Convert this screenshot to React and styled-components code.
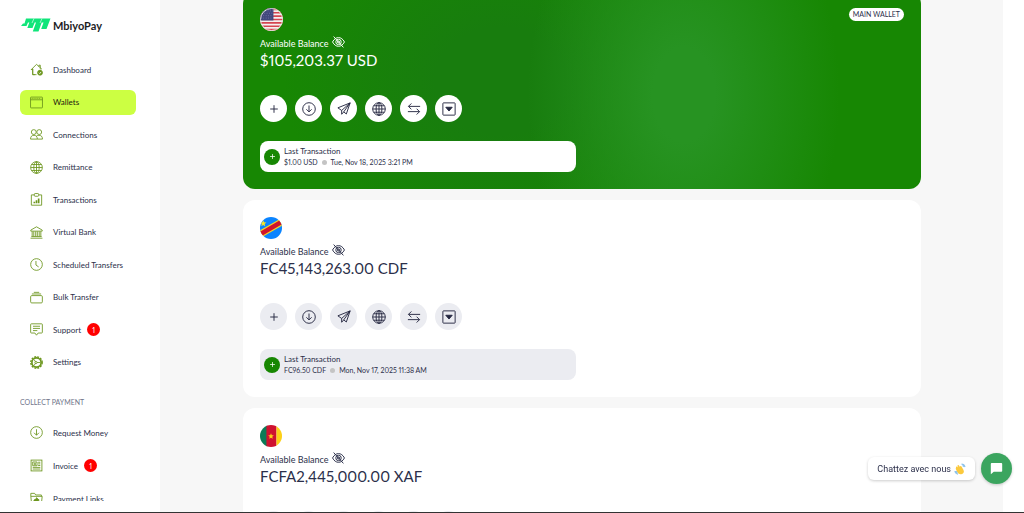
import styled, { createGlobalStyle } from "styled-components"

const menu = [
    { label: "Dashboard", icon: "home" },
    { label: "Wallets", icon: "wallet", active: true },
    { label: "Connections", icon: "people" },
    { label: "Remittance", icon: "globe" },
    { label: "Transactions", icon: "report" },
    { label: "Virtual Bank", icon: "bank" },
    { label: "Scheduled Transfers", icon: "clock" },
    { label: "Bulk Transfer", icon: "stack" },
    { label: "Support", icon: "message", count: 1 },
    { label: "Settings", icon: "gear" },
]

const collect = [
    { label: "Request Money", icon: "download" },
    { label: "Invoice", icon: "invoice", count: 1 },
    { label: "Payment Links", icon: "folder" },
]

const wallets = [
    { flag: "us", amount: "$105,203.37 USD", last: "$1.00 USD", date: "Tue, Nov 18, 2025 3:21 PM", main: true },
    { flag: "cd", amount: "FC45,143,263.00 CDF", last: "FC96.50 CDF", date: "Mon, Nov 17, 2025 11:38 AM" },
    { flag: "cm", amount: "FCFA2,445,000.00 XAF" },
]

const actions = [
    { label: "Add money", icon: "plus" },
    { label: "Request", icon: "download" },
    { label: "Send", icon: "send" },
    { label: "Remittance", icon: "globe" },
    { label: "Exchange", icon: "swap" },
    { label: "More", icon: "more" },
]

const shapes = {
    home: (
        <>
            <path d="M9 21.500H5V11L2 12.500 12 2.500l10 9" />
            <path d="M5 10.500v11h7M19 9.500V12M16.500 7V4h2.500v5" />
            <circle cx="18.500" cy="18" r="4.500" fill="currentColor" />
            <path d="m16.500 18 1.500 1.500 2.500-3" stroke="#fff" />
        </>
    ),
    wallet: (
        <>
            <rect x="1" y="2" width="22" height="20" rx="1" />
            <path d="M1 7h22" />
            <path d="M3 4.500h18" strokeDasharray="2 1.500" />
        </>
    ),
    people: (
        <>
            <circle cx="7" cy="7.500" r="4.500" />
            <circle cx="17" cy="7.500" r="4.500" />
            <path d="M1 20.500c0-5 2.500-7 6.500-7s6 3 6 7zM11.500 15.500c1-1.300 3-2 5-2 4 0 6.500 2 6.500 7h-9.500" />
        </>
    ),
    globe: (
        <>
            <circle cx="12" cy="12" r="10.800" />
            <ellipse cx="12" cy="12" rx="5" ry="10.800" />
            <path d="M12 1.200v21.600M1.200 12h21.600M3 6.500h18M3 17.500h18" />
        </>
    ),
    report: (
        <>
            <path d="M8 3.500H2.500v19h19v-19H16" />
            <rect x="8" y="1" width="8" height="5" rx="1.500" />
            <path d="M8 19v-3M12 19v-5.500M16 19v-9" strokeWidth="3" />
        </>
    ),
    bank: (
        <>
            <path d="M1.500 7.500 12 1.500l10.500 6v2h-21zM1 22.500h22M2.500 19.500h19" />
            <path d="M4 10v9M7 10v9M10.500 10v9M13.500 10v9M17 10v9M20 10v9" />
        </>
    ),
    clock: (
        <>
            <circle cx="12" cy="12" r="10.800" />
            <path d="M11 5.500V13l5 3.500" />
        </>
    ),
    stack: (
        <>
            <rect x="1.200" y="8.500" width="21.600" height="13.500" rx="2" />
            <path d="M3.500 5.500h17M7 2.500h10" />
        </>
    ),
    message: (
        <>
            <path d="M2.500 1.500h19a1.300 1.300 0 0 1 1.300 1.300v14.400a1.300 1.300 0 0 1-1.300 1.300H15l-3 4-3-4H2.500a1.300 1.300 0 0 1-1.300-1.300V2.800a1.300 1.300 0 0 1 1.300-1.300z" />
            <path d="M5.500 6h13M5.500 10h13M5.500 14h8" />
        </>
    ),
    gear: (
        <>
            <circle cx="12" cy="12" r="8.500" strokeWidth="3" />
            <circle cx="12" cy="12" r="10.500" strokeWidth="2.600" strokeDasharray="3.600 1.900" />
            <circle cx="11" cy="12" r="2" />
            <path d="m10 10.500-2.500-4M10 13.500l-2.500 4M13 12h6" />
        </>
    ),
    download: (
        <>
            <circle cx="12" cy="12" r="10.800" />
            <path d="M12 6v11M7.500 12.500 12 17l4.500-4.500" />
        </>
    ),
    invoice: (
        <>
            <rect x="2" y="2" width="20" height="20" />
            <path d="M5 5.500h8v7H5zM15 6h4M15 9h4M15 12h4M5 15.500h14M5 18.500h14M7 8h4M7 10.500h4" />
        </>
    ),
    folder: (
        <>
            <path d="M3 22 1.500 8V2.500h7l2 3H21V8M1.500 8h21L21 22" />
            <path d="M7 18c0-4 2-5 5-5v-2.500l5 4.500-5 4v-2.500c-2 0-3.500 0-5 1.500z" fill="currentColor" />
        </>
    ),
    plus: <path d="M12 5.500v13M5.500 12h13" />,
    send: <path d="M22.500 1.500 1.500 10l6.500 4.500zM22.500 1.500 16 20.500l-4.500-3.500zM8 14.500V21l3.500-4" />,
    swap: <path d="M22.500 7.500h-20M7.500 2.500l-5 5 5 5M1.500 16.500h20M16.500 11.500l5 5-5 5" />,
    more: (
        <>
            <rect x="1.500" y="1.500" width="21" height="21" rx="1" />
            <path d="M6.500 9h11L12 15.500z" fill="currentColor" />
        </>
    ),
    eye: (
        <>
            <path d="M1 11c3-5.500 6.500-8 11-8s8 2.500 11 8c-3 5.500-6.500 8-11 8s-8-2.500-11-8z" />
            <circle cx="12" cy="11" r="5" />
            <circle cx="12" cy="11" r="2" />
            <path d="m3 1 18 20" />
        </>
    ),
}

function Icon({ name, size = 13, weight = 1.6 }) {
    return (
        <Drawing viewBox="0 0 24 24" width={size} height={size} strokeWidth={weight} aria-hidden="true">
            {shapes[name]}
        </Drawing>
    )
}

function Flag({ country, large }) {
    return (
        <FlagCircle $large={large} viewBox="0 0 24 24" role="img" aria-label={country}>
            <clipPath id={`round-${country}`}>
                <circle cx="12" cy="12" r="12" />
            </clipPath>
            <g clipPath={`url(#round-${country})`}>
                {country === "us" && (
                    <>
                        <rect width="24" height="24" fill="#f5f0f0" />
                        <path d="M0 1.500h24M0 5h24M0 8.500h24M0 12h24M0 15.500h24M0 19h24M0 22.500h24" stroke="#d64550" strokeWidth="1.700" />
                        <rect width="14" height="13" fill="#41477d" />
                        <path d="M3 3h11M2 5.500h12M1 8h13M1 10.500h13" stroke="#8d90b8" strokeWidth=".7" strokeDasharray=".8 1.700" />
                        <circle cx="12" cy="12" r="11.500" fill="none" stroke="#dfe6da" />
                    </>
                )}
                {country === "cd" && (
                    <>
                        <rect width="24" height="24" fill="#0a84ff" />
                        <path d="M-2 20 26 4" stroke="#f5d327" strokeWidth="7.500" />
                        <path d="M-2 20 26 4" stroke="#d0142c" strokeWidth="5" />
                        <path d="m3.500 3.500 1 2.300 2.500.2-1.900 1.600.6 2.400-2.200-1.300L1.400 10 2 7.600.200 6l2.400-.2z" fill="#f5e527" />
                    </>
                )}
                {country === "cm" && (
                    <>
                        <rect width="8" height="24" fill="#0b7b57" />
                        <rect x="7" width="11" height="24" fill="#cf1230" />
                        <rect x="18" width="6" height="24" fill="#fdd017" />
                        <path d="m12 9 .9 2.100 2.200.2-1.700 1.500.5 2.200-1.900-1.200-1.900 1.200.5-2.200-1.700-1.500 2.200-.2z" fill="#fdd017" />
                    </>
                )}
            </g>
        </FlagCircle>
    )
}

function MenuItem({ item }) {
    return (
        <li>
            <MenuLink href="#" $active={item.active}>
                <Icon name={item.icon} />
                <span>{item.label}</span>
                {item.count && <Count>{item.count}</Count>}
            </MenuLink>
        </li>
    )
}

function Wallet({ wallet }) {
    return (
        <Card $main={wallet.main}>
            <Flag country={wallet.flag} large={wallet.main} />
            {wallet.main && <Tag>MAIN WALLET</Tag>}
            <Available>
                Available Balance
                <EyeButton aria-label="Hide balance">
                    <Icon name="eye" weight={1.8} />
                </EyeButton>
            </Available>
            <Amount>{wallet.amount}</Amount>
            <Actions>
                {actions.map((action) => (
                    <RoundButton key={action.label} aria-label={action.label} $main={wallet.main}>
                        <Icon name={action.icon} size={14} weight={1.6} />
                    </RoundButton>
                ))}
            </Actions>
            {wallet.last && (
                <Last $main={wallet.main}>
                    <LastIcon>
                        <Icon name="plus" size={9} weight={2} />
                    </LastIcon>
                    <div>
                        <p>Last Transaction</p>
                        <LastLine>
                            {wallet.last}
                            <Dot />
                            {wallet.date}
                        </LastLine>
                    </div>
                </Last>
            )}
        </Card>
    )
}

export default function App() {
    return (
        <Screen>
            <GlobalStyle />
            <Sidebar>
                <Logo href="#">
                    <svg viewBox="0 0 30 14" width="30" height="14" aria-hidden="true">
                        <path d="M5 .5h24.500L25.500 11h-5.300l2.300-6.500h-1.800l-3.200 9h-5.700l3.200-9h-1.300L11.500 10H6.300L8.300 4.500H7L5.500 8H0l2-2.500h1.500z" fill="#10e57a" />
                        <path d="m13 .5-2 4.500M21 .5l-2 4.500" stroke="#ffffff" strokeWidth=".6" />
                    </svg>
                    MbiyoPay
                </Logo>
                <Nav>
                    <Menu>
                        {menu.map((item) => (
                            <MenuItem key={item.label} item={item} />
                        ))}
                    </Menu>
                    <MenuTitle>COLLECT PAYMENT</MenuTitle>
                    <SmallMenu>
                        {collect.map((item) => (
                            <MenuItem key={item.label} item={item} />
                        ))}
                    </SmallMenu>
                </Nav>
            </Sidebar>
            <Main>
                {wallets.map((wallet) => (
                    <Wallet key={wallet.flag} wallet={wallet} />
                ))}
            </Main>
            <Chat>
                <ChatText>
                    Chattez avec nous
                    <svg viewBox="0 0 24 24" width="12" height="12" aria-hidden="true">
                        <path d="M4 9c0-2 2-3 3-1l1 1-1-3c0-2 2-3 3-1l2 3c0-2 2-3 3-1l4 7c2 4 0 7-3 8-4 1-7 0-9-3l-3-6c-1-2 0-3 0-4z" fill="#fbc93d" />
                        <path d="M15 2c3 0 6 2 7 6M17 5c1 0 2 1 2.500 2.500M2 16c0 3 3 6 6 6M4.500 16c0 2 1 3 2.500 3.500" fill="none" stroke="#8fc4ec" strokeWidth="2.500" />
                    </svg>
                </ChatText>
                <ChatButton aria-label="Chat">
                    <svg viewBox="0 0 24 24" width="13" height="13" aria-hidden="true">
                        <path d="M3 2h18a1.500 1.500 0 0 1 1.500 1.500v13A1.500 1.500 0 0 1 21 18H7l-5.500 4.500v-19A1.500 1.500 0 0 1 3 2z" fill="#fff" />
                    </svg>
                </ChatButton>
            </Chat>
        </Screen>
    )
}

const GlobalStyle = createGlobalStyle`
    * {
        box-sizing: border-box;
    }
    body {
        margin: 0;
        font-family: Lato, "Liberation Sans", sans-serif;
        font-size: 8px;
        font-variant-numeric: proportional-nums;
        color: #2b2f4a;
    }
    p, ul {
        margin: 0;
        padding: 0;
    }
    button {
        border: none;
        padding: 0;
        color: inherit;
        cursor: pointer;
    }
    a {
        color: inherit;
        text-decoration: none;
    }
`

const Drawing = styled.svg`
    display: block;
    flex: none;
    fill: none;
    stroke: currentColor;
    overflow: visible;
`

const Screen = styled.div`
    display: flex;
    height: 100vh;
    overflow: hidden;
    padding-right: 21px;
    background-color: #ffffff;
    border-bottom: 1px solid #333333;
`

const Sidebar = styled.aside`
    flex: none;
    width: 160px;
    display: flex;
    flex-direction: column;
    padding: 18px 24px 11px 20px;
`

const Logo = styled.a`
    display: flex;
    align-items: center;
    gap: 2px;
    height: 14px;
    padding-left: 1px;
    font-size: 11px;
    font-weight: 700;
    color: #1d1d1f;
`

const Nav = styled.nav`
    flex: 1;
    min-height: 0;
    margin-top: 25px;
    overflow: hidden;
`

const Menu = styled.ul`
    display: flex;
    flex-direction: column;
    justify-content: space-between;
    min-height: 318px;
    list-style: none;
`

const SmallMenu = styled(Menu)`
    min-height: 91px;
`

const MenuTitle = styled.p`
    margin: 21px 0 12px;
    line-height: 12px;
    font-size: 7px;
    color: #70758a;
`

const MenuLink = styled.a`
    display: flex;
    align-items: center;
    height: 25px;
    padding-left: 10px;
    border-radius: 6px;
    background-color: ${(props) => (props.$active ? "#ccff42" : "transparent")};
    color: ${(props) => (props.$active ? "#1c2010" : "#2b2f4a")};
    svg {
        margin-right: 10px;
        color: #6c961d;
    }
`

const Count = styled.span`
    display: grid;
    place-items: center;
    width: 13px;
    height: 13px;
    margin-left: 6px;
    border-radius: 50%;
    background-color: #ff0000;
    color: #ffffff;
    font-size: 7px;
`

const Main = styled.main`
    flex: 1;
    display: flex;
    flex-direction: column;
    gap: 11px;
    padding: 0 82px 0 83px;
    margin-top: -8px;
    background-color: #f7f7f7;
`

const Card = styled.section`
    flex: none;
    display: grid;
    grid-template-columns: 1fr auto;
    padding: ${(props) => (props.$main ? "16px" : "17px")} 17px 17px;
    border-radius: 12px;
    color: ${(props) => (props.$main ? "#ffffff" : "#2b2f4a")};
    background: ${(props) =>
        props.$main
            ? `radial-gradient(ellipse 23% 120% at 65% 52%, #279322 20%, transparent 100%),
               radial-gradient(ellipse 32% 90% at 38% 45%, #187d0e 30%, transparent 100%),
               #178703`
            : "#ffffff"};
`

const FlagCircle = styled.svg`
    width: ${(props) => (props.$large ? "23px" : "22px")};
    height: ${(props) => (props.$large ? "23px" : "22px")};
`

const Tag = styled.span`
    align-self: start;
    padding: 0 4px;
    border-radius: 7px;
    line-height: 13px;
    font-size: 7px;
    background-color: #ffffff;
    color: #2b2f4a;
`

const Available = styled.p`
    grid-column: 1 / -1;
    display: flex;
    gap: 3px;
    margin-top: 5px;
    font-size: 9px;
    line-height: 16px;
`

const EyeButton = styled.button`
    align-self: start;
    background: none;
`

const Amount = styled.p`
    grid-column: 1 / -1;
    font-size: 15px;
    line-height: 17px;
`

const Actions = styled.div`
    grid-column: 1 / -1;
    display: flex;
    gap: 8px;
    margin-top: 26px;
`

const RoundButton = styled.button`
    display: grid;
    place-items: center;
    width: 27px;
    height: 27px;
    border-radius: 50%;
    color: #23263f;
    background-color: ${(props) => (props.$main ? "#ffffff" : "#ebecf1")};
`

const Last = styled.div`
    grid-column: 1 / -1;
    display: flex;
    align-items: center;
    gap: 4px;
    width: 49%;
    height: 31px;
    margin-top: 19px;
    padding: 0 4px;
    border-radius: 8px;
    line-height: 11px;
    color: #2b2f4a;
    background-color: ${(props) => (props.$main ? "#ffffff" : "#ebecf1")};
`

const LastIcon = styled.span`
    display: grid;
    place-items: center;
    width: 16px;
    height: 16px;
    border-radius: 50%;
    color: #ffffff;
    background-color: #178703;
`

const LastLine = styled.p`
    display: flex;
    align-items: center;
    gap: 4px;
    font-size: 7px;
`

const Dot = styled.i`
    width: 5px;
    height: 5px;
    border-radius: 50%;
    background-color: #c4c4c4;
`

const Chat = styled.div`
    position: fixed;
    right: 12px;
    bottom: 29px;
    display: flex;
    align-items: center;
    gap: 6px;
`

const ChatText = styled.div`
    display: flex;
    align-items: center;
    gap: 3px;
    height: 23px;
    padding: 0 9px;
    border-radius: 6px;
    font-family: Roboto, sans-serif;
    font-size: 9px;
    background-color: #ffffff;
    box-shadow: 0 1px 3px rgba(0, 0, 0, 0.2);
`

const ChatButton = styled.button`
    display: grid;
    place-items: center;
    width: 31px;
    height: 31px;
    border-radius: 50%;
    background-color: #3ba55f;
    box-shadow: 0 1px 3px rgba(0, 0, 0, 0.2);
`
